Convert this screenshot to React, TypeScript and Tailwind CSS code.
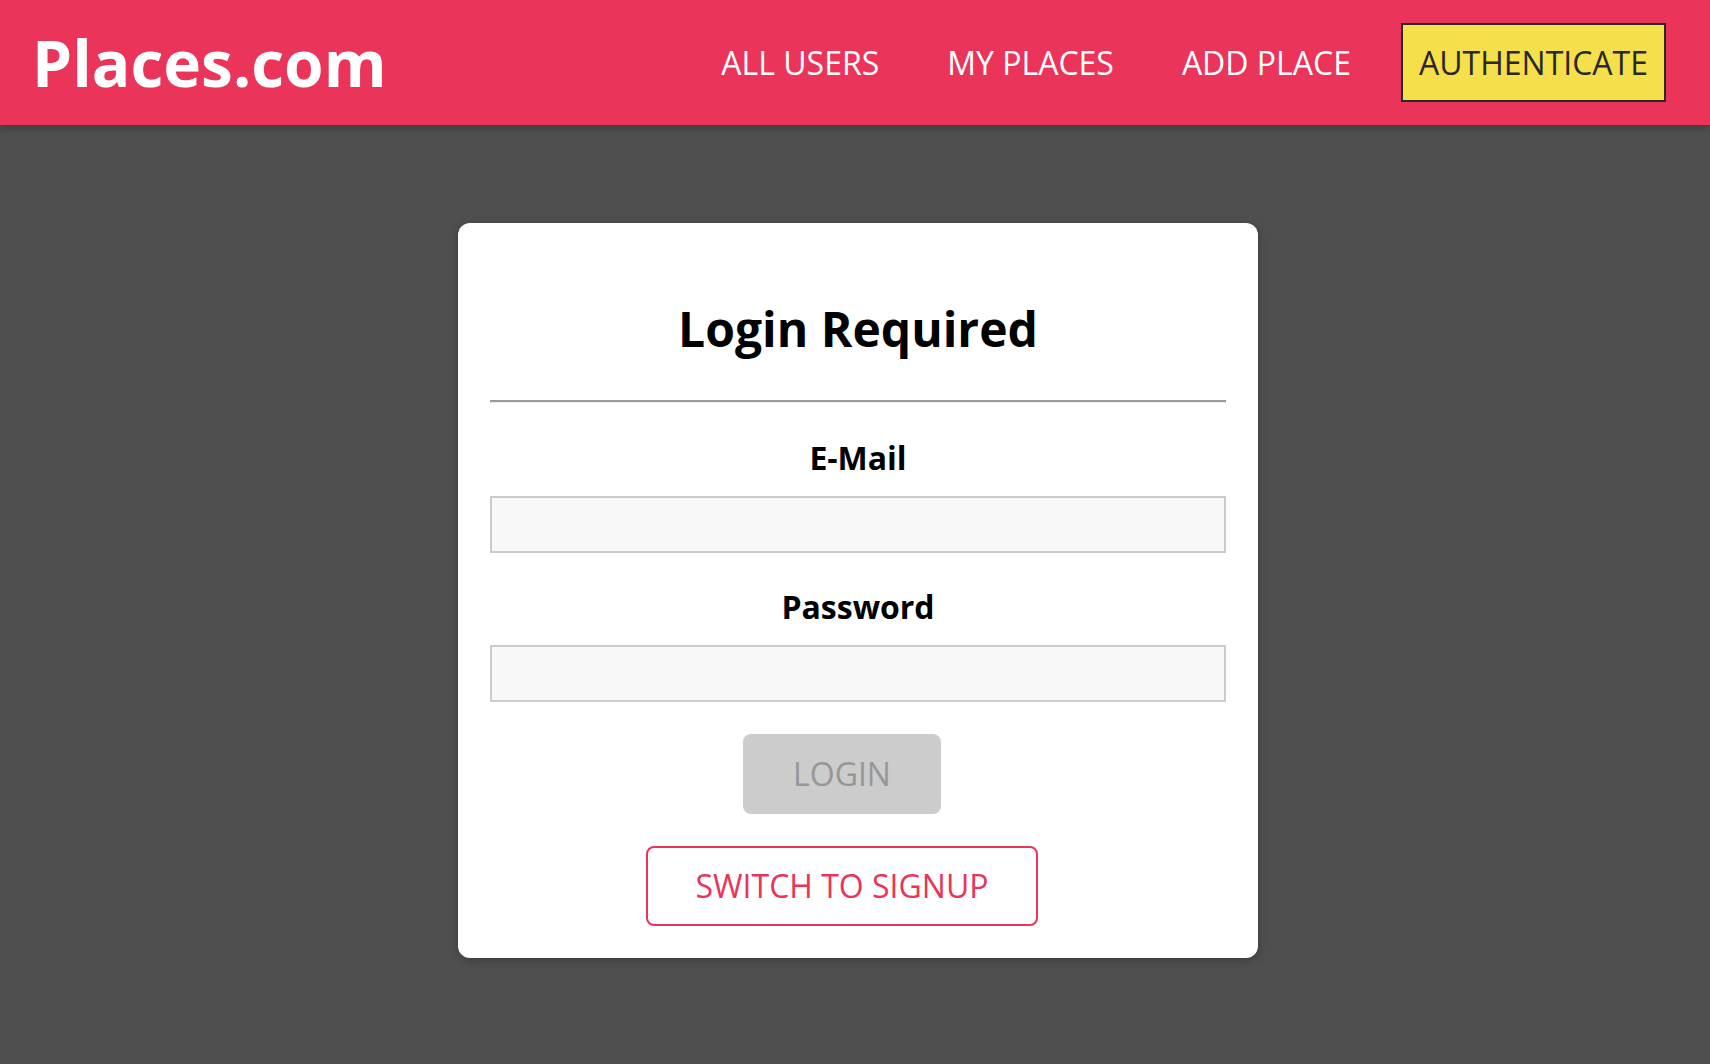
import React from "react";

export default function App() {
  return (
    <div className="min-h-screen bg-[#4f4f4f] font-['Open_Sans',sans-serif]">
      <header className="relative z-10 flex h-[125px] items-center justify-between bg-[#ea345a] pl-[32px] pr-[28px] shadow-[0_2px_8px_rgba(0,0,0,0.26)]">
        <h1 className="text-[64px] font-bold leading-none text-white">Places.com</h1>
        <nav>
          <ul className="flex items-center">
            {["ALL USERS", "MY PLACES", "ADD PLACE"].map((t) => (
              <li key={t} className="mx-[16px]">
                <a className="block border-2 border-transparent p-[16px] text-[32px] leading-[1.362] text-white">
                  {t}
                </a>
              </li>
            ))}
            <li className="mx-[16px]">
              <a className="block border-2 border-[#292929] bg-[#f5df4b] p-[16px] text-[32px] leading-[1.362] text-[#292929]">
                AUTHENTICATE
              </a>
            </li>
          </ul>
        </nav>
      </header>
      <main className="flex justify-center pl-[6px] pt-[98px]">
        <div className="w-[800px] rounded-[12px] bg-white p-[32px] text-center shadow-[0_2px_8px_rgba(0,0,0,0.26)]">
          <h2 className="mb-[39px] mt-[41px] text-[48px] font-bold leading-[1.362] text-black">Login Required</h2>
          <div className="border-t-2 border-b border-t-[#9a9a9a] border-b-[#ececec]" />
          <form className="pt-px">
            <div className="my-[32px]">
              <label className="mb-[16px] block text-[32px] font-bold leading-[1.362] text-black">E-Mail</label>
              <input className="block h-[57px] w-full border-2 border-[#cccccc] bg-[#f8f8f8] px-[8px] text-[32px] outline-none" />
            </div>
            <div className="my-[32px]">
              <label className="mb-[16px] block text-[32px] font-bold leading-[1.362] text-black">Password</label>
              <input type="password" className="block h-[57px] w-full border-2 border-[#cccccc] bg-[#f8f8f8] px-[8px] text-[32px] outline-none" />
            </div>
            <div className="flex justify-center pr-[32px]">
              <button type="button" disabled className="h-[80px] rounded-[8px] border-2 border-[#cccccc] bg-[#cccccc] px-[48px] text-[32px] leading-[1.362] text-[#979797]">
                LOGIN
              </button>
            </div>
          </form>
          <div className="mt-[32px] flex justify-center pr-[32px]">
            <button type="button" className="h-[80px] rounded-[8px] border-2 border-[#ea345a] bg-white px-[48px] text-[32px] leading-[1.362] text-[#ea345a]">
              SWITCH TO SIGNUP
            </button>
          </div>
        </div>
      </main>
    </div>
  );
}
